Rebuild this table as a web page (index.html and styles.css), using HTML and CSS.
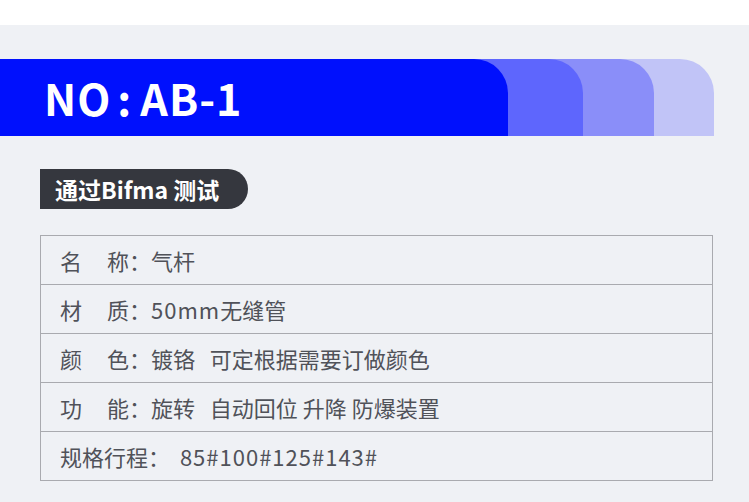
FILE: index.html
```html
<!DOCTYPE html>
<html lang="zh-CN">
<head>
<meta charset="utf-8">
<title>NO: AB-1</title>
<link rel="stylesheet" href="styles.css">
</head>
<body>
<div class="topband"></div>
<div class="banner">
  <div class="layer l4">
    <div class="layer l3">
      <div class="layer l2">
        <div class="layer l1">
          <h1 class="title">NO<span class="title-colon">:</span>AB-1</h1>
        </div>
      </div>
    </div>
  </div>
</div>
<div class="tag">通过Bifma 测试</div>
<div class="specs">
  <div class="row"><span class="label">名称</span><span class="colon">：</span><span class="value">气杆</span></div>
  <div class="row"><span class="label">材质</span><span class="colon">：</span><span class="value"><span class="num">50mm</span>无缝管</span></div>
  <div class="row"><span class="label">颜色</span><span class="colon">：</span><span class="value">镀铬   可定根据需要订做颜色</span></div>
  <div class="row"><span class="label">功能</span><span class="colon">：</span><span class="value">旋转   自动回位 升降 防爆装置</span></div>
  <div class="row"><span class="label-free">规格行程</span><span class="colon">：</span><span class="value">  <span class="num">85#100#125#143#</span></span></div>
</div>
</body>
</html>
```

FILE: styles.css
```css
html, body {
  margin: 0;
  padding: 0;
}
body {
  background: #eff1f5;
  font-family: "Noto Sans CJK SC", "Noto Sans", sans-serif;
  width: 749px;
  height: 502px;
  overflow: hidden;
}
.topband {
  height: 25px;
  background: #ffffff;
}
.banner {
  margin-top: 34px;
  height: 77px;
}
.layer {
  height: 77px;
  border-top-right-radius: 34px;
}
.l4 { width: 714px; background: #c1c4f7; }
.l3 { width: 654px; background: #8a8ef9; }
.l2 { width: 583px; background: #5e66fd; }
.l1 {
  width: 508px;
  background: #0010fd;
  display: flex;
  align-items: center;
}
.title {
  margin: 0;
  padding-left: 44px;
  color: #ffffff;
  font-size: 43px;
  font-weight: 700;
  line-height: 1;
  letter-spacing: 1px;
}
.title-colon {
  margin: 0 8px 0 6px;
}
.tag {
  margin: 33px 0 0 40px;
  width: 208px;
  height: 40px;
  box-sizing: border-box;
  padding-left: 15px;
  background: #35373e;
  border-radius: 0 20px 20px 0;
  color: #ffffff;
  font-size: 23px;
  font-weight: 700;
  line-height: 40px;
}
.specs {
  margin: 26px 0 0 40px;
  width: 673px;
  box-sizing: border-box;
  border: 1px solid #a9aaaf;
}
.row {
  height: 48px;
  border-bottom: 1px solid #a9aaaf;
  display: flex;
  align-items: center;
  padding-left: 19px;
  color: #505259;
  font-size: 22px;
  white-space: pre;
}
.row:last-child {
  border-bottom: none;
}
.label {
  display: inline-block;
  width: 69px;
  text-align: justify;
  text-align-last: justify;
}
.num {
  letter-spacing: 1px;
}
```
